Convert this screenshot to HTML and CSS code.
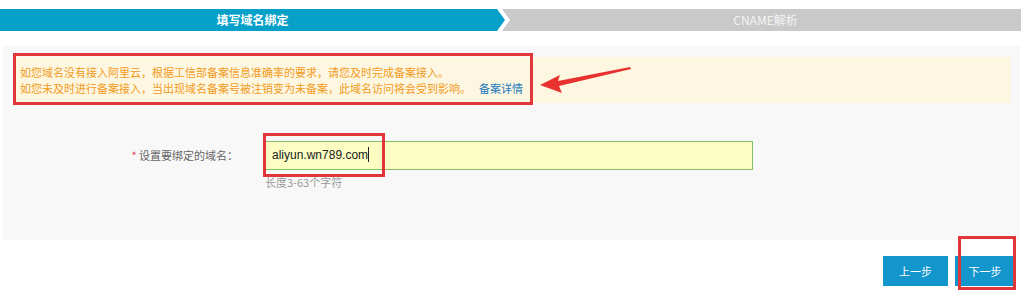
FILE: index.html
```html
<!DOCTYPE html>
<html lang="zh-CN">
<head>
<meta charset="utf-8">
<title>填写域名绑定</title>
<link rel="stylesheet" href="styles.css">
</head>
<body>
<div class="page">
  <div class="steps">
    <div class="step step-active">填写域名绑定</div>
    <div class="step step-next">CNAME解析</div>
  </div>

  <div class="panel">
    <div class="notice">
      <p>如您域名没有接入阿里云，根据工信部备案信息准确率的要求，请您及时完成备案接入。</p>
      <p>如您未及时进行备案接入，当出现域名备案号被注销变为未备案，此域名访问将会受到影响。<a class="link" href="#">备案详情</a></p>
      <span class="mark mark-notice"></span>
      <svg class="arrow" width="100" height="30" viewBox="0 0 100 30">
        <polygon points="0,19 20,9 18,15 90,1 91,3 19,20 22,27" fill="#e8322f"/>
      </svg>
    </div>

    <div class="form-row">
      <label class="label"><span class="req">*</span> 设置要绑定的域名：</label>
      <div class="field">
        <div class="input">aliyun.wn789.com<span class="caret"></span></div>
        <div class="hint">长度3-63个字符</div>
        <span class="mark mark-input"></span>
      </div>
    </div>
  </div>

  <div class="actions">
    <button class="btn btn-prev">上一步</button>
    <button class="btn btn-next">下一步<span class="mark mark-btn"></span></button>
  </div>
</div>
</body>
</html>
```

FILE: styles.css
```css
* { box-sizing: border-box; }
html, body { margin: 0; padding: 0; background: #fff; }
body {
  font-family: "Noto Sans CJK SC", "Noto Sans", sans-serif;
  font-size: 11px;
  color: #666;
}
.page { width: 1024px; height: 302px; overflow: hidden; padding-top: 9px; }

.steps { display: flex; height: 22px; width: 1021px; }
.step {
  height: 22px;
  line-height: 22px;
  text-align: center;
  color: #fff;
  font-size: 12px;
}
.step-active {
  width: 505px;
  background: #07a0c8;
  clip-path: polygon(0 0, 497px 0, 505px 50%, 497px 100%, 0 100%);
  font-weight: bold;
}
.step-next {
  flex: 1;
  margin-left: -3px;
  background: #c9c9c9;
  color: #f4f4f4;
  clip-path: polygon(0 0, 100% 0, 100% 100%, 0 100%, 8px 50%);
  padding-left: 8px;
}

.panel {
  margin: 15px 4px 0 3px;
  height: 194px;
  background: #f8f8f8;
  padding: 11px 9px 0 10px;
}
.notice {
  position: relative;
  height: 46px;
  background: #fdf7e1;
  padding: 7px 7px;
  color: #f29a1c;
  line-height: 16px;
}
.notice p { margin: 0; }
.link { color: #2179c0; text-decoration: none; margin-left: 8px; }

.mark { position: absolute; border: 3px solid #e2373a; pointer-events: none; }
.mark-notice { left: 0; top: -4px; width: 520px; height: 52px; }
.arrow { position: absolute; left: 527px; top: 9px; }

.form-row { display: flex; margin-top: 38px; }
.label {
  width: 240px;
  padding-right: 15px;
  text-align: right;
  line-height: 29px;
  color: #666;
}
.req { color: #e5484d; }
.field { position: relative; margin-left: 10px; }
.input {
  width: 490px;
  height: 29px;
  border: 1px solid #82c063;
  background: #fbfdc3;
  padding-left: 8px;
  line-height: 27px;
  font-family: "Liberation Sans", sans-serif;
  font-size: 12px;
  color: #222;
}
.caret { display: inline-block; width: 1px; height: 15px; background: #222; vertical-align: -3px; }
.hint { color: #9a9a9a; margin-top: 4px; padding-left: 2px; }
.mark-input { left: 0; top: -8px; width: 122px; height: 44px; }

.actions {
  display: flex;
  justify-content: flex-end;
  gap: 7px;
  margin-top: 16px;
  padding-right: 9px;
}
.btn {
  position: relative;
  height: 30px;
  border: 0;
  background: #1296cc;
  color: #fff;
  font-family: "Noto Sans CJK SC", sans-serif;
  font-size: 11px;
  padding: 0;
}
.btn-prev { width: 65px; }
.btn-next { width: 60px; }
.mark-btn { left: 3px; top: -20px; width: 58px; height: 54px; }
```
